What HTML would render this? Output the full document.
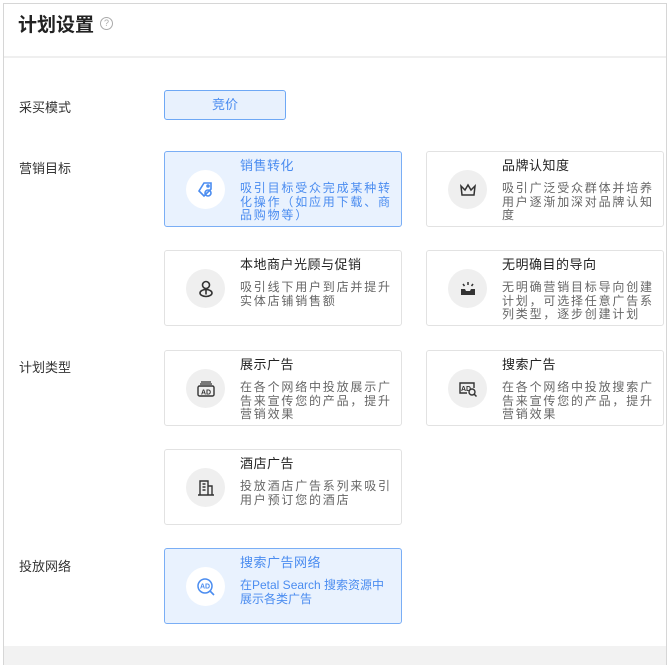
<!DOCTYPE html>
<html><head><meta charset="utf-8"><style>
*{box-sizing:border-box;margin:0;padding:0}
body{width:670px;height:665px;background:#fff;font-family:"Liberation Sans","Noto Sans CJK SC",sans-serif;position:relative;overflow:hidden}
.frame{position:absolute;left:3px;top:3px;width:664px;height:662px;border:1px solid #d6d6d6;border-bottom:none}
.hd{position:absolute;left:4px;top:4px;width:662px;height:54px;border-bottom:2px solid #efefef}
.title{position:absolute;left:18px;top:10px;font-size:19px;font-weight:bold;color:#222}
.q{position:absolute;left:100px;top:17px;width:13px;height:13px;border:1px solid #aaa;border-radius:50%;font-size:9px;color:#aaa;text-align:center;line-height:11px}
.lab{position:absolute;left:19px;font-size:13px;color:#333}
.btn{position:absolute;left:164px;top:90px;width:122px;height:30px;border:1px solid #6ea8f5;border-radius:3px;background:#e8f1fd;color:#4a8cf0;font-size:13px;text-align:center;line-height:28px}
.card{position:absolute;width:238px;height:76px;border:1px solid #e2e2e2;border-radius:3px;background:#fff}
.card.sel{border-color:#7aaef5;background:#e9f2fe}
.ic{position:absolute;left:21px;top:18px;width:39px;height:39px;border-radius:50%;background:#efefef;display:flex;align-items:center;justify-content:center}
.sel .ic{background:#fff}
.t{position:absolute;left:75px;top:3px;font-size:13px;color:#222;letter-spacing:0.5px}
.d{position:absolute;left:75px;top:30px;width:158px;font-size:12px;line-height:13.5px;letter-spacing:1.8px;color:#666}
.sel .t,.sel .d{color:#4a8cf0}
.foot{position:absolute;left:4px;top:646px;width:662px;height:19px;background:#f2f2f2}
</style></head><body>
<div class="frame"></div>
<div class="hd"></div>
<div class="title">计划设置</div><div class="q">?</div>
<div class="lab" style="top:97px">采买模式</div>
<div class="btn">竞价</div>
<div class="lab" style="top:158px">营销目标</div>
<div class="lab" style="top:357px">计划类型</div>
<div class="lab" style="top:556px">投放网络</div>

<div class="card sel" style="left:164px;top:151px"><div class="ic"><svg width="20" height="20" viewBox="0 0 20 20" fill="none" stroke="#4a8cf0" stroke-width="1.6"><path d="M8 3h7v6l-7 7-5-5z"/><circle cx="12" cy="6" r="1"/><circle cx="12" cy="13" r="3"/></svg></div><div class="t">销售转化</div><div class="d">吸引目标受众完成某种转化操作（如应用下载、商品购物等）</div></div>
<div class="card" style="left:426px;top:151px"><div class="ic"><svg width="20" height="20" viewBox="0 0 20 20" fill="none" stroke="#333" stroke-width="1.5"><path d="M3 6l4 4 3-5 3 5 4-4-1 9H4z"/></svg></div><div class="t">品牌认知度</div><div class="d">吸引广泛受众群体并培养用户逐渐加深对品牌认知度</div></div>

<div class="card" style="left:164px;top:250px"><div class="ic"><svg width="20" height="20" viewBox="0 0 20 20" fill="none" stroke="#333" stroke-width="1.6"><circle cx="10" cy="6" r="3.5"/><ellipse cx="10" cy="14" rx="6" ry="3.5"/><path d="M10 9.5v6"/></svg></div><div class="t">本地商户光顾与促销</div><div class="d">吸引线下用户到店并提升实体店铺销售额</div></div>
<div class="card" style="left:426px;top:250px"><div class="ic"><svg width="20" height="20" viewBox="0 0 20 20"><path d="M3 10h4l1 2h4l1-2h4v6H3z" fill="#333"/><path d="M5 5l1.5 2M10 3v3M15 5l-1.5 2" stroke="#333" stroke-width="1.5"/></svg></div><div class="t">无明确目的导向</div><div class="d">无明确营销目标导向创建计划，可选择任意广告系列类型，逐步创建计划</div></div>

<div class="card" style="left:164px;top:350px"><div class="ic"><svg width="22" height="20" viewBox="0 0 22 20"><rect x="3" y="7" width="16" height="10" rx="1.5" fill="none" stroke="#333" stroke-width="1.4"/><path d="M5 5h12M6 3h10" stroke="#333" stroke-width="1.2"/><text x="11" y="15.5" font-size="7" font-weight="bold" text-anchor="middle" fill="#333" font-family="Liberation Sans">AD</text></svg></div><div class="t">展示广告</div><div class="d">在各个网络中投放展示广告来宣传您的产品，提升营销效果</div></div>
<div class="card" style="left:426px;top:350px"><div class="ic"><svg width="22" height="20" viewBox="0 0 22 20"><path d="M10 14H3V4h14v5" fill="none" stroke="#333" stroke-width="1.4"/><text x="9" y="12" font-size="7" font-weight="bold" text-anchor="middle" fill="#333" font-family="Liberation Sans">AD</text><circle cx="15" cy="13" r="3" fill="none" stroke="#333" stroke-width="1.4"/><path d="M17 15l2.5 2.5" stroke="#333" stroke-width="1.5"/></svg></div><div class="t">搜索广告</div><div class="d">在各个网络中投放搜索广告来宣传您的产品，提升营销效果</div></div>

<div class="card" style="left:164px;top:449px"><div class="ic"><svg width="20" height="20" viewBox="0 0 20 20" fill="none" stroke="#333" stroke-width="1.4"><path d="M4 17V3h8v14M12 8h4v9M2 17h16M6.5 6h3M6.5 9h3M6.5 12h3"/></svg></div><div class="t">酒店广告</div><div class="d">投放酒店广告系列来吸引用户预订您的酒店</div></div>

<div class="card sel" style="left:164px;top:548px"><div class="ic"><svg width="22" height="22" viewBox="0 0 22 22"><circle cx="10" cy="10" r="7" fill="none" stroke="#4a8cf0" stroke-width="1.5"/><path d="M15 15l4 4" stroke="#4a8cf0" stroke-width="1.6"/><text x="10" y="12.5" font-size="7" font-weight="bold" text-anchor="middle" fill="#4a8cf0" font-family="Liberation Sans">AD</text></svg></div><div class="t">搜索广告网络</div><div class="d" style="letter-spacing:0;width:150px">在Petal Search 搜索资源中展示各类广告</div></div>

<div class="foot"></div>
</body></html>
